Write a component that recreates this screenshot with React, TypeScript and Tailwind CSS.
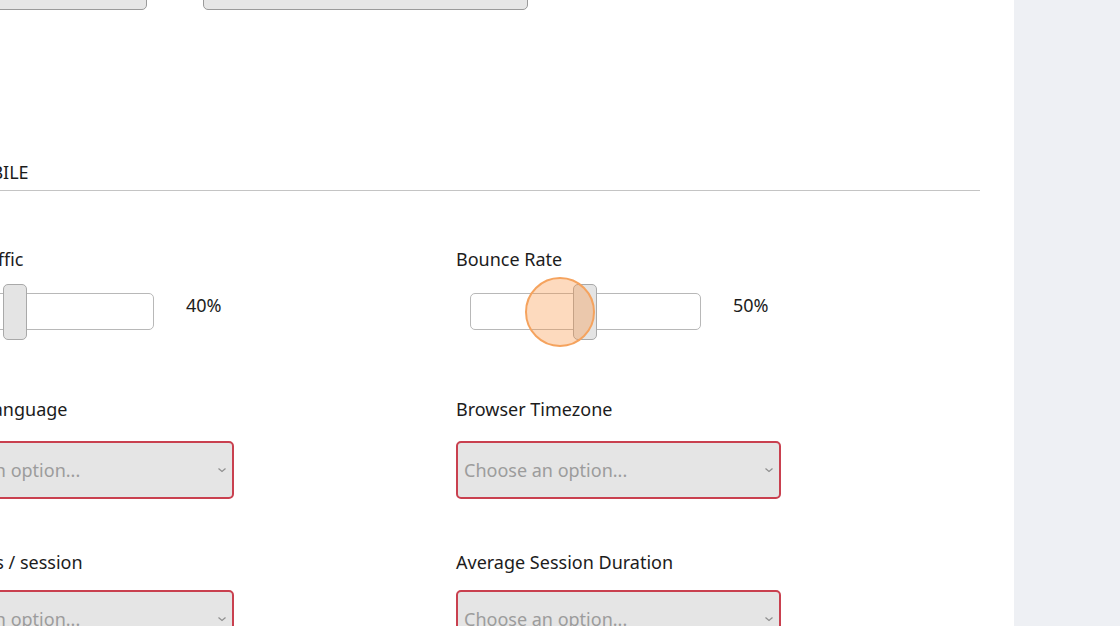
import React from 'react';

interface SliderFieldProps {
  label: string;
  value: number;
}

function SliderField({ label, value }: SliderFieldProps) {
  // thumb offset inside the 230px track
  const thumbLeft = Math.round(value * 2.3 - 13);
  return (
    <div className="flex flex-col">
      <label className="text-[18px] leading-[24px] text-[#1c1c1c]">{label}</label>
      <div className="mt-[12px] flex items-center h-[56px]">
        <div className="relative ml-[14px] w-[231px] h-[37px] rounded-[5px] border border-[#b8b8b8] bg-white">
          <div
            className="absolute top-[-10px] w-[24px] h-[56px] rounded-[5px] border border-[#a9a9a9] bg-[#e4e4e4]"
            style={{ left: thumbLeft }}
          />
        </div>
        <span className="ml-[32px] mb-[12px] text-[18px] leading-[24px] text-[#1c1c1c]">{value}%</span>
      </div>
    </div>
  );
}

function SelectField({ label, gap }: { label: string; gap: string }) {
  return (
    <div className="flex flex-col">
      <label className="text-[18px] leading-[24px] text-[#1c1c1c]">{label}</label>
      <div className={`${gap} flex items-center justify-between w-[325px] h-[58px] rounded-[5px] border-2 border-[#c9404f] bg-[#e5e5e5] pl-[6px] pr-[5px]`}>
        <span className="text-[18px] leading-[24px] text-[#9c9c9c]">Choose an option...</span>
        <svg width="10" height="10" viewBox="0 0 10 10" fill="none" stroke="#8f8f8f" strokeWidth="1.2">
          <path d="M1.5 3.5 L5 6.5 L8.5 3.5" />
        </svg>
      </div>
    </div>
  );
}

export default function App() {
  return (
    <div
      className="flex w-[1120px] h-[626px] overflow-hidden bg-white"
      style={{ fontFamily: '"Noto Sans", "Open Sans", sans-serif' }}
    >
      {/* Form panel */}
      <div className="relative w-[1014px] shrink-0 overflow-hidden">
        <div className="ml-[-91px] mr-[34px] flex flex-col">
          {/* Inputs from the section above */}
          <div className="mt-[-30px] flex h-[40px]">
            <div className="w-[238px] h-full rounded-b-[5px] border-[1.5px] border-[#9a9a9a] bg-[#e6e6e6]" />
            <div className="ml-[56px] w-[325px] h-full rounded-b-[5px] border-[1.5px] border-[#9a9a9a] bg-[#e6e6e6]" />
          </div>

          {/* Section heading */}
          <div className="mt-[150px] pb-[6px] border-b border-[#c4c4c4]">
            <h3 className="pl-[52px] text-[18px] leading-[24px] text-[#1c1c1c]">MOBILE</h3>
          </div>

          <div className="mt-[56px] grid grid-cols-[547px_1fr]">
            <SliderField label="Mobile Traffic" value={40} />
            <SliderField label="Bounce Rate" value={50} />
          </div>

          <div className="mt-[58px] grid grid-cols-[547px_1fr]">
            <SelectField label="Browser Language" gap="mt-[20px]" />
            <SelectField label="Browser Timezone" gap="mt-[20px]" />
          </div>

          <div className="mt-[51px] grid grid-cols-[547px_1fr]">
            <SelectField label="Page Views / session" gap="mt-[16px]" />
            <SelectField label="Average Session Duration" gap="mt-[16px]" />
          </div>
        </div>

        {/* Click indicator */}
        <div className="absolute left-[525px] top-[277px] w-[70px] h-[70px] rounded-full border-2 border-[#f5a35e] bg-[rgba(250,150,70,0.35)]" />
      </div>

      {/* Side panel */}
      <div className="flex-1 bg-[#eef0f4]" />
    </div>
  );
}
